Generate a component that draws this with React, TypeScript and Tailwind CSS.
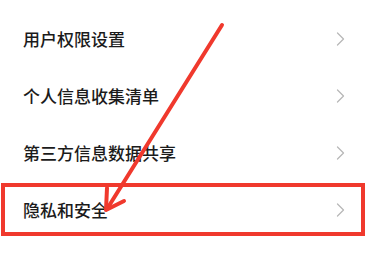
const items = ['用户权限设置', '个人信息收集清单', '第三方信息数据共享', '隐私和安全'];

function Chevron() {
  return (
    <svg width="9" height="14" viewBox="0 0 9 14" fill="none">
      <polyline points="1.5,1 7.5,7 1.5,13" stroke="#b8b8b8" strokeWidth="1.3" strokeLinejoin="round" strokeLinecap="round" />
    </svg>
  );
}

export default function App() {
  return (
    <div className="relative w-[367px] h-[259px] overflow-hidden bg-white font-['Noto_Sans_CJK_SC',sans-serif]">
      <div className="pt-[10px] flex flex-col">
        {items.map((label) => (
          <div key={label} className="h-[57px] flex items-center justify-between pl-[23px] pr-[22px]">
            <span className="text-[17px] font-medium text-[#1b1b1b] leading-none">{label}</span>
            <Chevron />
          </div>
        ))}
      </div>

      {/* annotation: highlight box */}
      <div className="absolute left-[1px] top-[183px] w-[364px] h-[53px] border-[4px] border-[#f0392d]" />

      {/* annotation: arrow */}
      <svg className="absolute inset-0" width="367" height="259" viewBox="0 0 367 259" fill="none">
        <g stroke="#f0392d" strokeWidth="4" strokeLinecap="round" strokeLinejoin="round">
          <line x1="222" y1="25" x2="107" y2="209" />
          <polyline points="107,188 106,210 124,201" />
        </g>
      </svg>
    </div>
  );
}
